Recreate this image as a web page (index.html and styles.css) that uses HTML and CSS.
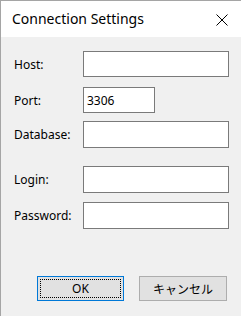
FILE: index.html
```html
<!DOCTYPE html>
<html lang="en">
<head>
  <meta charset="UTF-8" />
  <title>Connection Settings</title>
  <link rel="stylesheet" href="styles.css">
</head>
<body>
  <div class="window">
    <!-- Title bar -->
    <div class="titlebar">
      <span class="title">Connection Settings</span>
      <svg class="close" width="12" height="12" viewBox="0 0 12 12">
        <path d="M0.5 0.5 L11.5 11.5 M11.5 0.5 L0.5 11.5" stroke="#000" stroke-width="1" fill="none"/>
      </svg>
    </div>

    <!-- Form -->
    <div class="content">
      <div class="row row-host">
        <label>Host:</label>
        <input type="text" class="field">
      </div>
      <div class="row row-port">
        <label>Port:</label>
        <input type="text" class="field short" value="3306">
      </div>
      <div class="row row-db">
        <label>Database:</label>
        <input type="text" class="field">
      </div>
      <div class="row row-login">
        <label>Login:</label>
        <input type="text" class="field">
      </div>
      <div class="row row-pass">
        <label>Password:</label>
        <input type="password" class="field">
      </div>

      <div class="buttons">
        <button class="btn default"><span class="focus">OK</span></button>
        <button class="btn">キャンセル</button>
      </div>
    </div>
  </div>
</body>
</html>
```

FILE: styles.css
```css
html, body {
  margin: 0;
  padding: 0;
  height: 100%;
  overflow: hidden;
}

body {
  font-family: 'Noto Sans', 'Noto Sans CJK JP', sans-serif;
  font-size: 12px;
  color: #000;
}

.window {
  height: 100%;
  box-sizing: border-box;
  border-top: 1px solid #a5a5a5;
  border-left: 1px solid #a5a5a5;
  background: #f0f0f0;
  display: flex;
  flex-direction: column;
}

.titlebar {
  height: 36px;
  background: #fff;
  display: flex;
  align-items: center;
  justify-content: space-between;
  padding: 0 13px 0 11px;
}

.title {
  font-size: 14px;
  margin-top: -1px;
}

.close {
  margin-top: 1px;
}

.content {
  flex: 1;
  display: flex;
  flex-direction: column;
  padding-left: 13px;
}

.row {
  display: flex;
  align-items: center;
  height: 26px;
}

.row label {
  width: 69px;
}

.row-host { margin-top: 14px; }
.row-port { margin-top: 10px; }
.row-db { margin-top: 8px; height: 27px; }
.row-login { margin-top: 18px; height: 27px; }
.row-pass { margin-top: 9px; height: 27px; }

.field {
  box-sizing: border-box;
  width: 146px;
  height: 100%;
  margin: 0;
  border: 1px solid #7a7a7a;
  background: #fff;
  font-family: 'Noto Sans', sans-serif;
  font-size: 12px;
  padding: 0 3px;
  outline: none;
}

.field.short {
  width: 72px;
}

.buttons {
  display: flex;
  gap: 15px;
  margin-top: 47px;
  padding-left: 23px;
}

.btn {
  box-sizing: border-box;
  width: 88px;
  height: 25px;
  margin: 0;
  border: 1px solid #adadad;
  background: #e1e1e1;
  font-family: 'Noto Sans', 'Noto Sans CJK JP', sans-serif;
  font-size: 12px;
  color: #000;
  padding: 0;
}

.btn.default {
  border: 1px solid #0078d7;
  padding: 2px;
  width: 87px;
}

.focus {
  display: flex;
  align-items: center;
  justify-content: center;
  height: 100%;
  box-sizing: border-box;
  border: 1px dotted #000;
}
```
